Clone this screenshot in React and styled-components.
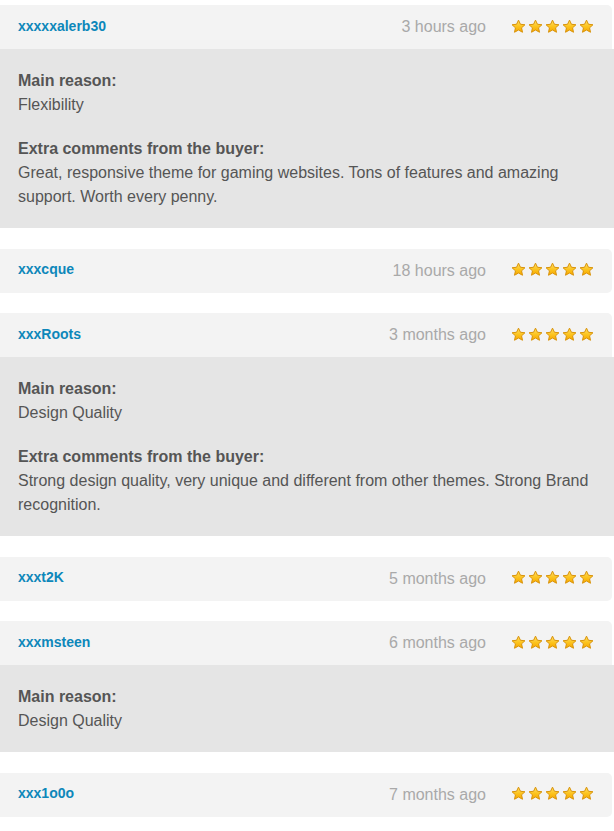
import React from "react";
import styled, { createGlobalStyle } from "styled-components";

const Global = createGlobalStyle`
  html, body { margin: 0; padding: 0; background: #ffffff; }
  body { font-family: "Liberation Sans", Arial, sans-serif; }
`;

const List = styled.div`
  width: 614px;
  padding-top: 5px;
  display: flex;
  flex-direction: column;
  gap: 20.5px;
`;

const Card = styled.div`
  display: flex;
  flex-direction: column;
`;

const Header = styled.div`
  height: 44px;
  margin-right: 2px;
  background: #f3f3f3;
  border-radius: ${(p) => (p.$open ? "0 5px 0 0" : "0 5px 5px 0")};
  display: flex;
  align-items: center;
  padding: 0 18px;
  box-sizing: border-box;
`;

const User = styled.a`
  font-size: 14px;
  font-weight: bold;
  color: #0d87ba;
  text-decoration: none;
  flex: 1;
  margin-top: -3px;
`;

const Time = styled.span`
  font-size: 16px;
  color: #a9a9a9;
  margin-right: 25px;
`;

const Stars = styled.div`
  display: flex;
  gap: 2px;
  margin-top: -2px;
`;

const Body = styled.div`
  background: #e5e5e5;
  padding: 20px 18px 19px;
  display: flex;
  flex-direction: column;
  gap: 20px;
  color: #555555;
  font-size: 16px;
  line-height: 24px;
`;

const Section = styled.div``;

const Label = styled.div`
  font-weight: bold;
`;

const Text = styled.div``;

const Star = () => (
  <svg width="15" height="15" viewBox="0 0 24 24">
    <defs>
      <linearGradient id="sg" x1="0" y1="0" x2="0" y2="1">
        <stop offset="0" stopColor="#ffe066" />
        <stop offset="0.55" stopColor="#fcc21b" />
        <stop offset="1" stopColor="#f7a800" />
      </linearGradient>
    </defs>
    <path
      d="M12 1.8l3.1 6.6 7.2.8-5.4 4.9 1.5 7.1L12 17.6l-6.4 3.6 1.5-7.1L1.7 9.2l7.2-.8z"
      fill="url(#sg)"
      stroke="#d9930a"
      strokeWidth="1.6"
      strokeLinejoin="round"
    />
  </svg>
);

const reviews = [
  {
    user: "xxxxxalerb30",
    time: "3 hours ago",
    reason: "Flexibility",
    comment:
      "Great, responsive theme for gaming websites. Tons of features and amazing support. Worth every penny.",
  },
  { user: "xxxcque", time: "18 hours ago" },
  {
    user: "xxxRoots",
    time: "3 months ago",
    reason: "Design Quality",
    comment:
      "Strong design quality, very unique and different from other themes. Strong Brand recognition.",
  },
  { user: "xxxt2K", time: "5 months ago" },
  { user: "xxxmsteen", time: "6 months ago", reason: "Design Quality" },
  { user: "xxx1o0o", time: "7 months ago" },
];

export default function App() {
  return (
    <>
      <Global />
      <List>
        {reviews.map((r) => {
          const open = !!(r.reason || r.comment);
          return (
            <Card key={r.user}>
              <Header $open={open}>
                <User href="#">{r.user}</User>
                <Time>{r.time}</Time>
                <Stars>
                  {[0, 1, 2, 3, 4].map((i) => (
                    <Star key={i} />
                  ))}
                </Stars>
              </Header>
              {open && (
                <Body>
                  {r.reason && (
                    <Section>
                      <Label>Main reason:</Label>
                      <Text>{r.reason}</Text>
                    </Section>
                  )}
                  {r.comment && (
                    <Section>
                      <Label>Extra comments from the buyer:</Label>
                      <Text>{r.comment}</Text>
                    </Section>
                  )}
                </Body>
              )}
            </Card>
          );
        })}
      </List>
    </>
  );
}
